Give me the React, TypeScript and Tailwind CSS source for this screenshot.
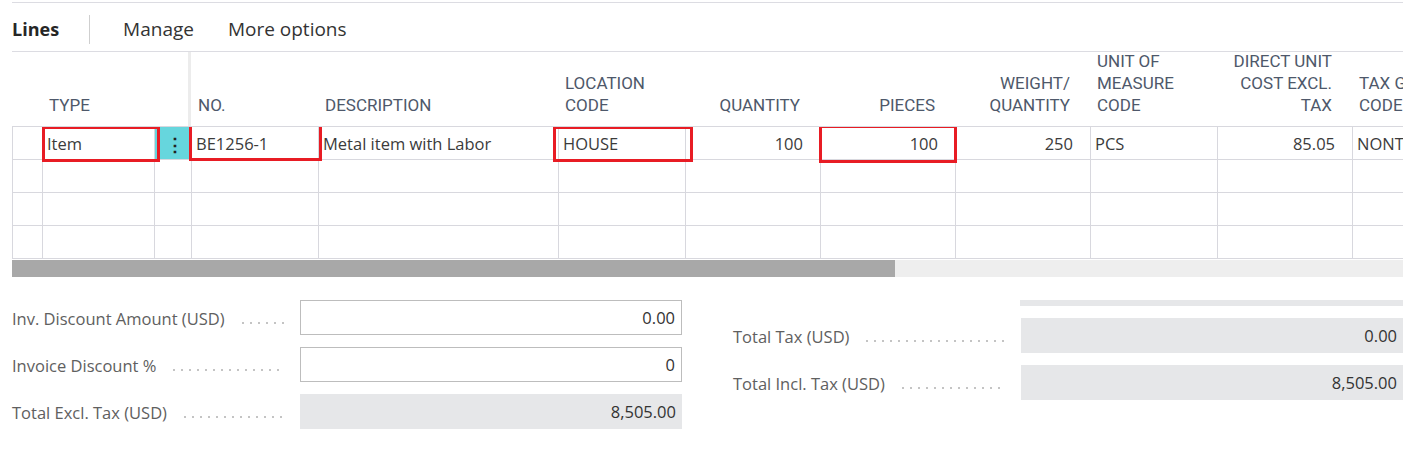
import React from 'react';

const grid =
  'grid grid-cols-[30px_112px_37px_127px_240px_127px_135px_135px_135px_127px_135px_51px]';

type Col = { label: string[]; right?: boolean; sep?: boolean };

const columns: Col[] = [
  { label: [] },
  { label: ['TYPE'] },
  { label: [], sep: true },
  { label: ['NO.'] },
  { label: ['DESCRIPTION'] },
  { label: ['LOCATION', 'CODE'] },
  { label: ['QUANTITY'], right: true },
  { label: ['PIECES'], right: true },
  { label: ['WEIGHT/', 'QUANTITY'], right: true },
  { label: ['UNIT OF', 'MEASURE', 'CODE'] },
  { label: ['DIRECT UNIT', 'COST EXCL.', 'TAX'], right: true },
  { label: ['TAX G', 'CODE'] },
];

const firstRow: { text: string; right?: boolean }[] = [
  { text: '' },
  { text: 'Item' },
  { text: '' },
  { text: 'BE1256-1' },
  { text: 'Metal item with Labor' },
  { text: 'HOUSE' },
  { text: '100', right: true },
  { text: '100', right: true },
  { text: '250', right: true },
  { text: 'PCS' },
  { text: '85.05', right: true },
  { text: 'NONT' },
];

const bodyFont = "font-['Open_Sans',sans-serif]";

function Leader() {
  return (
    <span className="flex-1 h-[2px] ml-[14px] mr-[10px] mt-[7px] bg-[radial-gradient(circle,#c4c4c4_0.8px,transparent_1px)] bg-[length:8px_2px]" />
  );
}

function Field({ label, value, readOnly }: { label: string; value: string; readOnly?: boolean }) {
  return (
    <div className="flex items-center h-[35px]">
      <div className="flex items-center w-[288px] pr-[5px] pt-[4px] text-[16.5px] text-[#606060] whitespace-nowrap">
        <span>{label}</span>
        <Leader />
      </div>
      <div
        className={`flex-1 h-full flex items-center justify-end pr-[6px] pt-[2px] text-[16.5px] text-[#333] ${
          readOnly ? 'bg-[#e6e7e9]' : 'border border-[#bdbdbd] bg-white'
        }`}
      >
        {value}
      </div>
    </div>
  );
}

export default function App() {
  return (
    <div className={`w-[1420px] h-[463px] bg-white overflow-hidden ${bodyFont}`}>
      <div className="ml-[12px] w-[1391px] pt-[2px]">
        {/* action bar */}
        <div className="border-t border-[#dcdce2] h-[50px] flex items-center border-b pt-[4px]">
          <span className="text-[18px] font-bold text-[#262626]">Lines</span>
          <span className="w-px h-[29px] bg-[#cfcfcf] ml-[30px] mr-[33px]" />
          <span className="text-[19px] text-[#333]">Manage</span>
          <span className="text-[19px] text-[#333] ml-[34px]">More options</span>
        </div>

        {/* column headers */}
        <div className={`${grid} h-[74px] overflow-hidden`}>
          {columns.map((c, i) => (
            <div
              key={i}
              className={`flex flex-col justify-end pb-[10px] font-['Roboto',sans-serif] text-[17px] leading-[22px] text-[#4e586a] whitespace-nowrap overflow-hidden ${
                c.right ? 'items-end pr-[20px]' : 'items-start pl-[7px]'
              } ${c.sep ? 'border-r-[3px] border-[#ececec]' : ''}`}
            >
              {c.label.map((l) => (
                <span key={l}>{l}</span>
              ))}
            </div>
          ))}
        </div>

        {/* rows */}
        <div className="relative overflow-hidden border-t border-l border-[#d8d8de]">
          {[0, 1, 2, 3].map((r) => (
            <div key={r} className={`${grid} h-[33px]`}>
              {firstRow.map((cell, i) => (
                <div
                  key={i}
                  className={`border-r border-b border-[#d8d8de] flex items-center pt-[2px] text-[16.5px] text-[#3b3b3b] whitespace-nowrap overflow-hidden ${
                    cell.right ? 'justify-end pr-[17px]' : 'pl-[4px]'
                  } ${r === 0 && i === 2 ? 'bg-[#66d6dd] justify-center pl-0' : ''} ${
                    i === 11 ? 'border-r-0' : ''
                  }`}
                >
                  {r === 0 && i === 2 ? (
                    <span className="text-[18px] font-bold text-[#222] leading-none">⋮</span>
                  ) : r === 0 ? (
                    cell.text
                  ) : null}
                </div>
              ))}
            </div>
          ))}
          <div className="absolute left-[29px] top-[-1px] w-[118px] h-[36px] border-[3px] border-[#e81c24]" />
          <div className="absolute left-[176px] top-[-3px] w-[133px] h-[37px] border-[3px] border-[#e81c24]" />
          <div className="absolute left-[540px] top-[-1px] w-[140px] h-[36px] border-[3px] border-[#e81c24]" />
          <div className="absolute left-[806px] top-[-2px] w-[138px] h-[38px] border-[3px] border-[#e81c24]" />
        </div>

        {/* scrollbar */}
        <div className="mt-px h-[17px] flex bg-[#eeeeee]">
          <div className="w-[883px] h-full bg-[#a8a8a8]" />
        </div>

        {/* totals */}
        <div className="mt-[23px] flex gap-[51px]">
          <div className="w-[670px] flex flex-col gap-[12px]">
            <Field label="Inv. Discount Amount (USD)" value="0.00" />
            <Field label="Invoice Discount %" value="0" />
            <Field label="Total Excl. Tax (USD)" value="8,505.00" readOnly />
          </div>
          <div className="flex-1 flex flex-col gap-[12px]">
            <div className="flex h-[6px]">
              <div className="w-[287px]" />
              <div className="flex-1 bg-[#e6e7e9]" />
            </div>
            <Field label="Total Tax (USD)" value="0.00" readOnly />
            <Field label="Total Incl. Tax (USD)" value="8,505.00" readOnly />
          </div>
        </div>
      </div>
    </div>
  );
}
